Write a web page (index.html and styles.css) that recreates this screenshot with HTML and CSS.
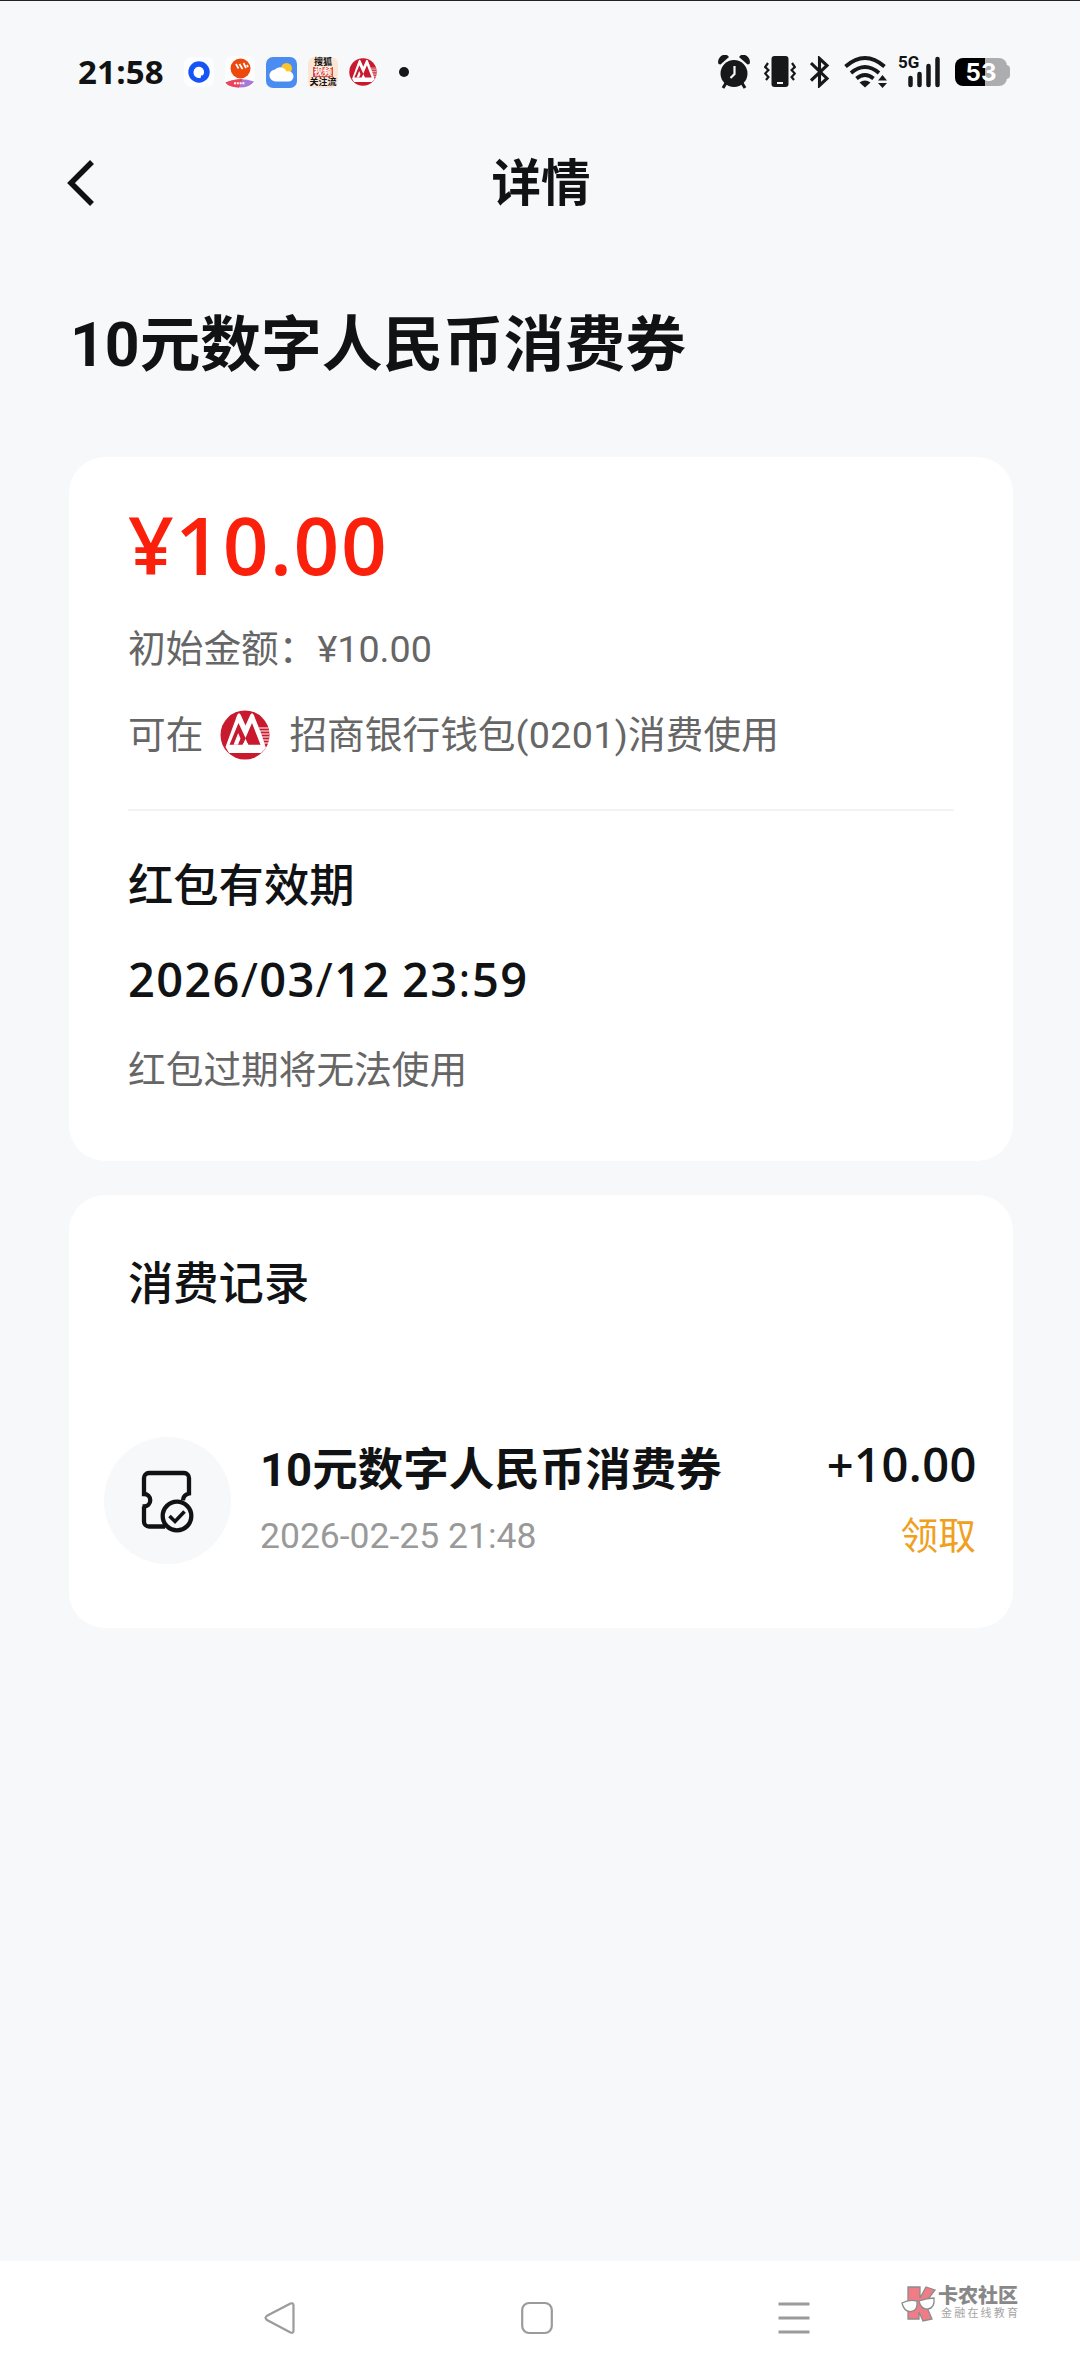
FILE: index.html
```html
<!DOCTYPE html>
<html lang="zh-CN">
<head>
<meta charset="utf-8">
<title>详情</title>
<link rel="stylesheet" href="styles.css">
</head>
<body>
<svg width="0" height="0" class="defs" aria-hidden="true">
  <symbol id="cmb" viewBox="0 0 50 50">
    <circle cx="25" cy="25" r="24.500" fill="#c8192e"/>
    <path d="M5.500 37 17.200 5Q19 1.500 20.800 5L25.500 15.500 30.200 5Q32 1.500 33.800 5L41 23 46 38 41 43H9Z" fill="#fff"/>
    <path d="M9.500 34.800 18.500 13 25.500 28 32 13 40.500 34.800H28.500L25.500 30 22.500 34.800Z" fill="#c8192e"/>
    <path d="M13.500 34.800 18.200 23 20.500 28.500 18 34.800ZM28 34.800 25.500 28.500 23 34.800Z" fill="#fff"/>
    <path d="M39 18h9M40 21h9M41 24h8M42 27h7M43 30h6M44 33h4" stroke="#fff" stroke-width="1.100"/>
  </symbol>
</svg>
<div class="screen">
  <header class="status">
    <span class="clock">21:58</span>
    <div class="apps">
      <svg width="30" height="30" viewBox="0 0 30 30"><rect width="30" height="30" rx="7" fill="#fdfdfe"/><circle cx="15" cy="15" r="10.700" fill="#1554f5"/><path d="M9.500 15a5.300 5.300 0 1 1 9.500 3.200l-2 .3-.2 2.200A5.500 5.500 0 0 1 9.500 15Z" fill="#fff"/></svg>
      <svg width="30" height="32" viewBox="0 0 30 32"><rect width="30" height="32" rx="7" fill="#fdfdfe"/><circle cx="15.500" cy="12.500" r="10" fill="#ec4a0c"/><path d="m11 8 2.500 4.500M14.500 8l3 5M18.500 7l2.500 5M22 9l1 2" fill="none" stroke="#fff" stroke-width="1.700"/><path d="M.5 26.500q14-6 28.500-1-4 6-14 6T.5 26.500Z" fill="#a878d8"/><path d="M.5 26.500q8-3.500 17-3.500L14 31.500Q3 31 .5 26.500Z" fill="#ee4458"/><path d="M9 27.300h11" stroke="#fff" stroke-width="2" stroke-dasharray="2 .8"/></svg>
      <svg width="31" height="31" viewBox="0 0 31 31"><rect width="31" height="31" rx="7" fill="#4b8cf1"/><circle cx="20.500" cy="11.500" r="5.500" fill="#fcc52b"/><path d="M10 24.500a6 6 0 0 1-1-12 7 7 0 0 1 11.500 2 5.200 5.200 0 1 1 1 10Z" fill="#fff"/></svg>
      <div class="sohu"><span>搜狐</span><span class="sohu-mid">视频</span><span>关注流</span></div>
      <svg width="28" height="28"><use href="#cmb"/></svg>
      <i class="dot"></i>
    </div>
    <div class="indicators">
      <svg width="32" height="34" viewBox="0 0 32 34" fill="#17181a"><circle cx="16" cy="18.500" r="13.500"/><path d="M.5 9A7 7 0 0 1 9-.0L11 2 2.500 9.500ZM31.500 9A7 7 0 0 0 23 0L21 2l8.500 7.500Z"/><path d="m8 28-3 5M24 28l3 5" stroke="#17181a" stroke-width="3"/><path d="M16.500 11v8l-4 4" fill="none" stroke="#f6f8fa" stroke-width="2.200"/></svg>
      <svg width="32" height="32" viewBox="0 0 32 32"><rect x="7.500" y="0" width="17" height="31" rx="3" fill="#17181a"/><path d="M13 27h6" stroke="#f6f8fa" stroke-width="2"/><path d="m4 7-2.800 4 3.200 3-3.200 3.500L4.400 21 2 24M28 7l2.800 4-3.200 3 3.200 3.500-3.200 3.500 2.400 3" fill="none" stroke="#17181a" stroke-width="2.200"/></svg>
      <svg width="20" height="32" viewBox="0 0 20 32"><path d="m1 7 16 15.500-7.500 7V2.500L17 9.500 1 24.500" fill="none" stroke="#17181a" stroke-width="3.100"/></svg>
      <svg width="44" height="32" viewBox="0 0 44 32"><g fill="none" stroke="#17181a" stroke-width="3.800"><path d="M1.500 10.500q19.500-17 39 0M7 17q14-12 28 0M12.500 22.500q8.500-7 17 0"/></g><path d="M15.500 26.500q5.500-4 11 0L21 31.500ZM34 24.500l4.500-5.500 4.500 5.500ZM34 27l4.500 5 4.500-5Z" fill="#17181a"/></svg>
      <div class="signal"><b>5G</b><svg width="42" height="32" viewBox="0 0 42 32"><path d="M11.500 22v7M20.500 18v11M29.500 10v19M38.500 3v26" stroke="#17181a" stroke-width="4.500" stroke-linecap="round"/></svg></div>
      <div class="battery">53</div>
    </div>
  </header>

  <nav class="topbar">
    <svg class="back" width="28" height="46" viewBox="0 0 28 46"><path d="M25 2 4 23 25 44" fill="none" stroke="#111" stroke-width="5.500"/></svg>
    <h1>详情</h1>
  </nav>

  <main>
    <h2 class="coupon-title">10元数字人民币消费券</h2>

    <section class="card summary">
      <div class="amount">¥10.00</div>
      <p class="line initial">初始金额：<span>¥10.00</span></p>
      <p class="line bank">可在<svg width="50" height="50"><use href="#cmb"/></svg>招商银行钱包<span>(0201)</span>消费使用</p>
      <h3 class="valid-title">红包有效期</h3>
      <div class="valid-date">2026<i>/</i>03<i>/</i>12 23<i>:</i>59</div>
      <p class="line expire">红包过期将无法使用</p>
    </section>

    <section class="card records">
      <h3>消费记录</h3>
      <div class="record">
        <div class="badge">
          <svg width="54" height="64" viewBox="0 0 54 64" fill="none" stroke="#111214" stroke-width="4.300"><path d="M25 57.500H9a5 5 0 0 1-5-5V37.500h-1.500M4 37.500a5.500 5.500 0 0 0 0-12.500V9a5 5 0 0 1 5-5h35a5 5 0 0 1 5 5v15.500q-6 1.500-6 7"/><circle cx="37" cy="47" r="14.300"/><path d="m29.500 47 5.500 5.500 9.500-10" stroke-width="3.600"/></svg>
        </div>
        <div class="info">
          <div class="name">10元数字人民币消费券</div>
          <div class="time">2026-02-25 21:48</div>
        </div>
        <div class="result">
          <div class="delta">+10.00</div>
          <div class="state">领取</div>
        </div>
      </div>
    </section>
  </main>

  <footer class="navbar">
    <svg width="32" height="34" viewBox="0 0 32 34"><path d="M26.500 2.500 3 14.800q-3 2 0 4.200L26.500 31.500Q29.500 32.500 29.500 29.500V4.500Q29.500 1.500 26.500 2.500Z"/></svg>
    <svg width="32" height="34" viewBox="0 0 32 34"><rect x="1.200" y="2" width="29.600" height="30" rx="7"/></svg>
    <svg width="32" height="34" viewBox="0 0 32 34" stroke-width="3"><path d="M.5 3h31M.5 17h31M.5 31h31"/></svg>
    <div class="watermark">
      <svg width="36" height="38" viewBox="0 0 36 38"><path d="M7 2H19V13L25 2 34 5 24 18 31 34 22 36 18 27V34H7Z" fill="#f07c85" stroke="#8c8c8c" stroke-width="1.300"/><path d="M1 18Q8 14 16 16q1 10-6 10.500Q3 27 1 18ZM18 16q8-3 15-3 1 10-6 11-7 1-9-8Z" fill="#fff" stroke="#8c8c8c" stroke-width="1.300"/></svg>
      <div><b>卡农社区</b><span>金融在线教育</span></div>
    </div>
  </footer>
</div>
</body>
</html>
```
FILE: styles.css
```css
* { box-sizing: border-box; margin: 0; padding: 0; }

body {
  background: #f6f8fa;
  color: #111214;
  font-family: Roboto, "Noto Sans CJK SC", sans-serif;
}

svg { display: block; flex: none; }
.defs { position: absolute; }
i { font-style: normal; }

.screen {
  width: 1080px;
  height: 2373px;
  display: flex;
  flex-direction: column;
  border-top: 1px solid #222;
}

/* Status bar */
.status {
  height: 142px;
  padding: 0 73px 0 78px;
  display: flex;
  align-items: center;
}
.clock {
  width: 106px;
  font: 700 33px/40px "Open Sans", sans-serif;
  letter-spacing: 0.2px;
}
.apps { display: flex; align-items: center; gap: 11px; }
.sohu {
  width: 30px;
  height: 31px;
  display: flex;
  flex-direction: column;
  align-items: center;
  border-radius: 7px;
  background: #fbe5d5;
  font-size: 9px;
  line-height: 10px;
  font-weight: 700;
  white-space: nowrap;
}
.sohu-mid { padding: 0 1px; background: #dc4b3f; color: #fff; }
.dot { width: 10px; height: 10px; margin-left: 11px; border-radius: 50%; background: #17181a; }
.indicators { margin-left: auto; display: flex; align-items: center; gap: 14px; }
.signal { position: relative; width: 42px; margin-left: -3px; }
.signal b { position: absolute; left: -1px; top: -3px; font: 700 17px/18px Roboto, sans-serif; }
.battery {
  position: relative;
  width: 52px;
  height: 28px;
  border-radius: 8px;
  background: linear-gradient(90deg, #000 30px, #adadaf 30px);
  color: #fff;
  font: 700 24px/29px Inter, sans-serif;
  text-align: center;
}
.battery::after {
  content: "";
  position: absolute;
  right: -3px;
  top: 7px;
  width: 4px;
  height: 14px;
  border-radius: 0 4px 4px 0;
  background: #adadaf;
}

/* Title bar */
.topbar {
  height: 80px;
  padding: 0 67px;
  display: grid;
  grid-template-columns: 28px 1fr 28px;
  align-items: center;
}
.topbar h1 { padding: 3px 0 0 2px; text-align: center; font-size: 49.500px; line-height: 77px; font-weight: 700; }

/* Content */
main { flex: 1; padding: 0 67px 0 69px; }
.coupon-title { padding: 83px 0 0 1px; height: 234px; font-size: 60.700px; line-height: 80px; font-weight: 700; }
.card { border-radius: 36px; background: #fff; }
.summary { height: 704px; padding: 47px 59px 0; }
.amount { font: 650 80px/80px "Open Sans", sans-serif; letter-spacing: 1.6px; color: #fa200c; }
.line { font-size: 37.700px; line-height: 50px; color: #666; }
.initial { margin-top: 40px; }
.initial span { margin-left: 1px; }
.bank {
  margin-top: 36px;
  padding-bottom: 49px;
  display: flex;
  box-sizing: content-box;
  border-bottom: 2px solid #f3f3f4;
}
.bank span { letter-spacing: 0.3px; }
.bank svg { margin: 0 19px 0 17px; }
.valid-title { margin-top: 46px; font-size: 45.300px; line-height: 60px; font-weight: 500; }
.valid-date { margin-top: 32px; font: 650 47px/60px "Open Sans", sans-serif; letter-spacing: 1.300px; word-spacing: -2px; }
.valid-date i { font-weight: 400; }
.expire { margin-top: 36px; }

.records { height: 433px; margin-top: 34px; padding: 60px 37px 0 35px; }
.records h3 { padding-left: 24px; font-size: 45.300px; line-height: 60px; font-weight: 500; }
.record { margin-top: 122px; display: flex; }
.badge {
  width: 127px;
  height: 127px;
  display: grid;
  place-items: center;
  border-radius: 50%;
  background: #f6f8fa;
}
.badge svg { margin-left: -1px; }
.info { margin-left: 29px; }
.name { margin-top: 4px; font-size: 45.500px; line-height: 60px; font-weight: 700; }
.time { margin-top: 13px; font-size: 35.500px; line-height: 44px; color: #999; }
.result { margin-left: auto; text-align: right; }
.delta { margin: -3px -1px 0 0; font: 650 47px/60px "Open Sans", sans-serif; letter-spacing: 0.5px; }
.state { margin-top: 17px; font-size: 37.700px; line-height: 50px; color: #f0a01e; }

/* System navigation */
.navbar {
  position: relative;
  height: 112px;
  padding: 1px 270px 0 264px;
  display: flex;
  align-items: center;
  justify-content: space-between;
  background: #fff;
  fill: none;
  stroke: #9b9b9b;
  stroke-width: 2.200;
}
.watermark {
  position: absolute;
  left: 901px;
  top: 24px;
  display: flex;
  stroke: none;
  color: #888;
}
.watermark b { display: block; font-size: 20px; line-height: 22px; font-weight: 900; }
.watermark div { display: flex; flex-direction: column; margin-left: 1px; }
.watermark span { margin-left: 3px; font-size: 11px; line-height: 13px; letter-spacing: 2.200px; color: #a5a5a5; }
```
